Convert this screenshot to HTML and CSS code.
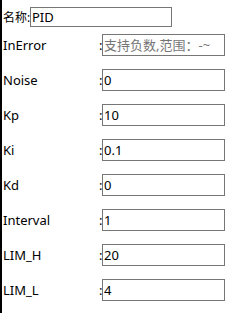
FILE: index.html
```html
<!DOCTYPE html>
<html lang="zh">
<head>
    <meta charset="UTF-8">
    <title>PID</title>
    <link rel="stylesheet" href="styles.css">
</head>
<body>
<div class="nodeForm">
    <div class="nameRow">
        <span class="nameLabel">名称:</span><input type="text" class="nameInput" value="PID">
    </div>
    <div class="paramRow">
        <span class="paramLabel">InError</span><span class="colon">:</span><input type="text" class="paramInput" placeholder="支持负数,范围：-~">
    </div>
    <div class="paramRow">
        <span class="paramLabel">Noise</span><span class="colon">:</span><input type="text" class="paramInput" value="0">
    </div>
    <div class="paramRow">
        <span class="paramLabel">Kp</span><span class="colon">:</span><input type="text" class="paramInput" value="10">
    </div>
    <div class="paramRow">
        <span class="paramLabel">Ki</span><span class="colon">:</span><input type="text" class="paramInput" value="0.1">
    </div>
    <div class="paramRow">
        <span class="paramLabel">Kd</span><span class="colon">:</span><input type="text" class="paramInput" value="0">
    </div>
    <div class="paramRow">
        <span class="paramLabel">Interval</span><span class="colon">:</span><input type="text" class="paramInput" value="1">
    </div>
    <div class="paramRow">
        <span class="paramLabel">LIM_H</span><span class="colon">:</span><input type="text" class="paramInput" value="20">
    </div>
    <div class="paramRow">
        <span class="paramLabel">LIM_L</span><span class="colon">:</span><input type="text" class="paramInput" value="4">
    </div>
</div>
</body>
</html>
```

FILE: styles.css
```css
html, body {
    margin: 0;
    padding: 0;
    background: #ffffff;
}

body {
    font-family: "Noto Sans", "Noto Sans CJK SC", sans-serif;
    font-size: 13px;
    color: #000000;
}

.nodeForm {
    border-left: 2px solid #000000;
    padding-left: 1px;
    min-height: 313px;
    box-sizing: border-box;
}

.nodeForm input {
    font-family: "Noto Sans", "Noto Sans CJK SC", sans-serif;
    font-size: 13px;
    color: #000000;
    border: 1px solid #767676;
    padding: 0 1px;
    margin: 0;
    outline: none;
    box-sizing: border-box;
    background: #ffffff;
}

.nodeForm input::placeholder {
    color: #757575;
}

/* name row */
.nameRow {
    display: flex;
    align-items: center;
    padding-top: 7px;
    height: 20px;
}

.nameLabel {
    font-size: 12px;
    width: 27px;
    white-space: nowrap;
}

.nameInput {
    width: 142px;
    height: 20px;
}

/* params */
.paramRow {
    display: flex;
    align-items: center;
    margin-top: 13px;
    height: 22px;
}

.nameRow + .paramRow {
    margin-top: 7px;
}

.paramLabel {
    width: 96px;
}

.colon {
    width: 3px;
}

.paramInput {
    width: 123px;
    height: 22px;
}
```
